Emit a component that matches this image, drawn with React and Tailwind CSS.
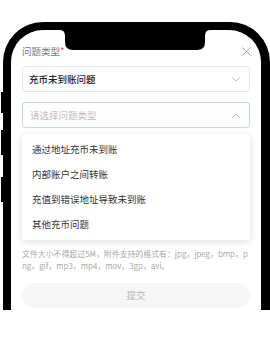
import React from 'react';

const options = ['通过地址充币未到账', '内部账户之间转账', '充值到错误地址导致未到账', '其他充币问题'];

const Chevron = ({ up }) => (
  <svg width="8" height="5" viewBox="0 0 8 5" fill="none" className="shrink-0">
    <path
      d={up ? 'M0.7 4.3 L4 1 L7.3 4.3' : 'M0.7 0.7 L4 4 L7.3 0.7'}
      stroke="#b5b5b5"
      strokeWidth="0.9"
      strokeLinecap="round"
      strokeLinejoin="round"
    />
  </svg>
);

const App = () => {
  return (
    <div className="relative w-[270px] h-[339px] overflow-hidden bg-white font-['Noto_Sans_CJK_SC','Noto_Sans',sans-serif]">
      <div className="pt-[22px] pl-[3px]">
        <div className="relative h-[288px] w-[267px] bg-black rounded-t-[40px] pt-[8px] pl-[8px] pr-[9px]">
          <div className="h-full bg-white rounded-t-[32px] px-[11px] pt-[15px]">
            {/* cabecera */}
            <div className="flex h-[12px] items-center justify-between">
              <span className="text-[9.5px] leading-[12px] text-[#7a7a7a]">
                问题类型<span className="text-[#e5484d]">*</span>
              </span>
              <svg width="9" height="9" viewBox="0 0 9 9" className="-mr-[1px]">
                <path d="M0.5 0.5 L8.5 8.5 M8.5 0.5 L0.5 8.5" stroke="#9a9a9a" strokeWidth="0.9" />
              </svg>
            </div>

            <div className="mt-[9px] flex h-[26px] items-center justify-between rounded-[3px] border border-[#e6e6e6] pl-[6px] pr-[9px]">
              <span className="text-[9.5px] font-medium text-[#222]">充币未到账问题</span>
              <Chevron />
            </div>

            <div className="mt-[10px] flex h-[26px] items-center justify-between rounded-[3px] border border-[#c9d5ee] pl-[7px] pr-[9px]">
              <span className="text-[9.5px] text-[#bdbdbd]">请选择问题类型</span>
              <Chevron up />
            </div>

            <div className="mt-[6px] rounded-[3px] bg-white py-[3px] shadow-[0_2px_8px_rgba(0,0,0,0.13)]">
              {options.map((op) => (
                <div key={op} className="flex h-[25px] items-center pl-[10px] text-[9.5px] text-[#333]">
                  {op}
                </div>
              ))}
            </div>

            <p className="mt-[8px] break-all text-[7.9px] leading-[12px] text-[#a8a8a8]">
              文件大小不得超过5M，附件支持的格式有：jpg，jpeg，bmp，png，gif，mp3，mp4，mov，3gp，avi。
            </p>

            <button className="mt-[11px] flex h-[25px] w-full items-center justify-center rounded-full bg-[#f6f6f6] text-[9.5px] text-[#b8b8b8]">
              提交
            </button>
          </div>

          {/* notch */}
          <svg className="absolute left-[57px] top-[8px]" width="150" height="20" viewBox="0 0 150 20">
            <path d="M0 0 L150 0 Q145 0 145 6 L145 12 Q145 20 137 20 L13 20 Q5 20 5 12 L5 6 Q5 0 0 0 Z" fill="#000" />
          </svg>
        </div>
      </div>

      {/* botones laterales */}
      <div className="absolute left-[1px] top-[92px] h-[21px] w-[3px] bg-black" />
      <div className="absolute left-[1px] top-[130px] h-[25px] w-[3px] bg-black" />
      <div className="absolute left-[1px] top-[177px] h-[25px] w-[3px] bg-black" />
    </div>
  );
};

export default App;
